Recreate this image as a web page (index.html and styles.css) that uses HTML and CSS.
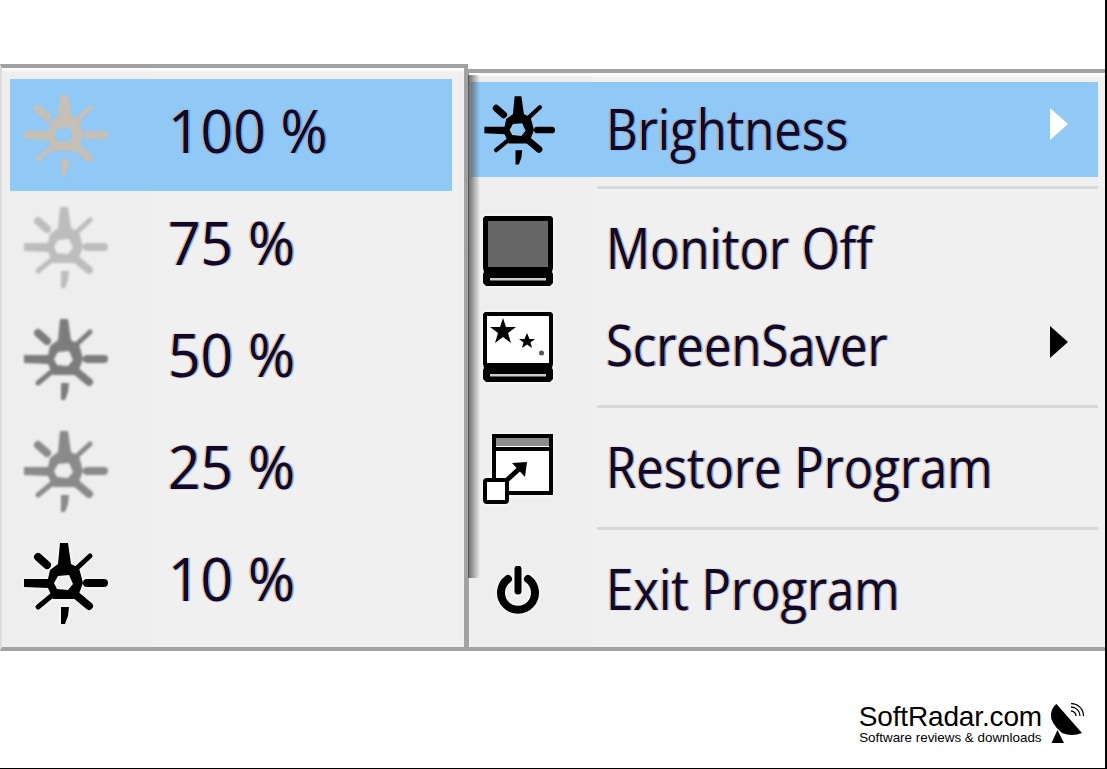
FILE: index.html
```html
<!DOCTYPE html>
<html lang="en">
<head>
<meta charset="utf-8">
<title>Brightness menu</title>
<link rel="stylesheet" href="styles.css">
</head>
<body>
<svg class="defs" width="0" height="0" aria-hidden="true">
  <symbol id="sun" viewBox="-44 -44 88 88">
    <path fill="currentColor" fill-rule="evenodd" d="M-4 -40H4L7 -19L15 -15L19 0L13 16L-11 16L-16 5L-40 4V-4L-16 -4L-14 -13L-6 -19ZM-6 -7L5 -8L9 1L4 7L-7 6L-10 0Z"/>
    <path fill="currentColor" d="M-3 24H5L4 33L1 41H-3Z"/>
    <g fill="none" stroke="currentColor" stroke-linecap="round">
      <path d="M23 0H40" stroke-width="8"/>
      <path d="M-26 -26L-17 -18M13 13L25 23" stroke-width="8"/>
      <path d="M26 -27L13 -15M-26 24L-9 10" stroke-width="5"/>
    </g>
  </symbol>
</svg>
<main class="page">
  <div class="menus">
    <section class="menu menu-left">
      <div class="level level-active">
        <svg class="sun sun-100"><use href="#sun"/></svg><span class="label">100 %</span>
      </div>
      <div class="level">
        <svg class="sun sun-75"><use href="#sun"/></svg><span class="label">75 %</span>
      </div>
      <div class="level">
        <svg class="sun sun-50"><use href="#sun"/></svg><span class="label">50 %</span>
      </div>
      <div class="level">
        <svg class="sun sun-25"><use href="#sun"/></svg><span class="label">25 %</span>
      </div>
      <div class="level">
        <svg class="sun sun-10"><use href="#sun"/></svg><span class="label">10 %</span>
      </div>
    </section>
    <section class="menu menu-right">
      <div class="row row-active">
        <span class="icon-cell"><svg class="sun-small"><use href="#sun"/></svg></span>
        <span class="label">Brightness</span>
        <svg class="arrow arrow-white" viewBox="0 0 18 32"><path d="M0 0L18 16L0 32Z"/></svg>
      </div>
      <div class="sep sep-first"></div>
      <div class="row">
        <span class="icon-cell">
          <svg class="glyph glyph-low" viewBox="0 0 70 70">
            <path d="M2 0H68L70 2V52L69 56L70 58V67L67 70H3L0 67V58L1 56L0 52V2Z"/>
            <rect x="5" y="5" width="60" height="46" fill="#666"/>
            <rect x="7" y="62" width="56" height="2.500" fill="#ccc"/>
          </svg>
        </span>
        <span class="label">Monitor Off</span>
      </div>
      <div class="row">
        <span class="icon-cell">
          <svg class="glyph" viewBox="0 0 70 70">
            <path d="M2 0H68L70 2V52L69 56L70 58V67L67 70H3L0 67V58L1 56L0 52V2Z"/>
            <rect x="4" y="4" width="62" height="47" fill="#fff"/>
            <rect x="7" y="62" width="56" height="2.500" fill="#ccc"/>
            <path d="M20 6L23 15H33L25 21L28 31L20 25L12 31L15 21L7 15H17Z"/>
            <path d="M44 21L46.500 27H52L47.500 30.500L49 36L44 32.500L39 36L40.500 30.500L36 27H41.500Z"/>
            <circle cx="58.500" cy="41" r="2.500" fill="#555"/>
          </svg>
        </span>
        <span class="label">ScreenSaver</span>
        <svg class="arrow" viewBox="0 0 18 32"><path d="M0 0L18 16L0 32Z"/></svg>
      </div>
      <div class="sep"></div>
      <div class="row">
        <span class="icon-cell">
          <svg class="glyph" viewBox="0 0 70 70">
            <rect x="11" y="2" width="57" height="57" fill="#fff" stroke="#000" stroke-width="4"/>
            <rect x="13" y="4" width="53" height="8" fill="#8c8c8c"/>
            <path d="M11 15H68" stroke="#000" stroke-width="4"/>
            <rect x="2" y="46" width="22" height="22" rx="2" fill="#fff" stroke="#000" stroke-width="4"/>
            <path d="M24 46L36 35" stroke="#000" stroke-width="5"/>
            <path d="M29 29L44 28L42 43Z"/>
          </svg>
        </span>
        <span class="label">Restore Program</span>
      </div>
      <div class="sep"></div>
      <div class="row">
        <span class="icon-cell">
          <svg class="power" viewBox="0 0 46 48">
            <path d="M13 13A17 17 0 1 0 33 13" fill="none" stroke="#000" stroke-width="8" stroke-linecap="round"/>
            <path d="M23 3V25" fill="none" stroke="#000" stroke-width="7" stroke-linecap="round"/>
          </svg>
        </span>
        <span class="label">Exit Program</span>
      </div>
    </section>
  </div>
  <footer class="brand">
    <div class="brand-text">
      <div class="brand-name">SoftRadar.com</div>
      <div class="brand-tag">Software reviews &amp; downloads</div>
    </div>
    <svg class="dish" viewBox="0 0 36 41">
      <path d="M6.500 1L32 30Q22 34 12 30Q0 20 1 11Q2 4 6.500 1Z"/>
      <path d="M7.500 27L14 40H1.500Z"/>
      <path d="M21 8A5 5 0 0 1 26 13M21 4A9 9 0 0 1 30 13M21 0.500A12.500 12.500 0 0 1 33.500 13" fill="none" stroke="#000" stroke-width="1.300"/>
    </svg>
  </footer>
</main>
</body>
</html>
```
FILE: styles.css
```css
* {
  box-sizing: border-box;
}

html,
body {
  margin: 0;
  padding: 0;
  background: #fff;
}

.defs {
  display: block;
  width: 0;
  height: 0;
}

.page {
  width: 1107px;
  height: 769px;
  overflow: hidden;
  padding-top: 64px;
  border-right: 2px solid #000;
  border-bottom: 1px solid #000;
}

.menus {
  display: flex;
  align-items: flex-start;
}

.menu {
  background: #f0f0f0;
  border-style: solid;
  border-color: #a2a2a2;
  font-family: "Open Sans", "Noto Sans", sans-serif;
}

.label {
  display: inline-block;
  padding-bottom: 4px;
  font-size: 56px;
  line-height: 1;
  white-space: nowrap;
  color: #12082c;
  text-shadow: -1.5px 0 1px rgba(255, 130, 0, 0.65), 1.5px 0 1px rgba(0, 120, 255, 0.65);
  transform: scaleX(0.875);
  transform-origin: left center;
  filter: blur(0.7px);
}

.menu-left {
  position: relative;
  z-index: 2;
  flex: none;
  width: 468px;
  height: 587px;
  border-width: 4px 4px 4px 2px;
  border-left-color: #dcdcdc;
  padding: 11px 12px 0 8px;
  background: linear-gradient(90deg, #eeeeee 150px, #f0f0f0 150px);
  box-shadow: inset 0 3px 2px #fbfbfb;
}

.menu-left .label {
  padding-bottom: 10px;
  font-size: 60px;
  transform: scaleX(0.95);
}

.menu-left::after {
  content: "";
  position: absolute;
  top: 7px;
  left: 100%;
  margin-left: 4px;
  width: 12px;
  height: 503px;
  background: linear-gradient(90deg, rgba(60, 60, 60, 0.75), rgba(60, 60, 60, 0));
}

.level {
  display: flex;
  align-items: center;
  height: 112px;
}

.level-active {
  background: #90c8f6;
}

.sun {
  flex: none;
  width: 88px;
  height: 88px;
  margin: 0 60px 0 10px;
  filter: blur(0.8px);
}

.sun-100 { color: #c8bfb5; }
.sun-75 { color: #bdbdbd; }
.sun-50 { color: #7c7c7c; }
.sun-25 { color: #8a8a8a; }
.sun-10 { color: #000; filter: blur(0.6px) drop-shadow(0 0 2px #fff); }

.menu-right {
  flex: none;
  width: 640px;
  height: 582px;
  margin-top: 5px;
  margin-left: -3px;
  border-width: 4px 0 4px 4px;
  padding: 9px 7px 0 2px;
  background: linear-gradient(90deg, #eeeeee 123px, #f0f0f0 123px);
  box-shadow: inset 0 3px 2px #fbfbfb;
}

.row {
  display: flex;
  align-items: center;
  height: 96px;
}

.row + .row {
  margin-top: 1px;
}

.row-active {
  height: 95px;
  background: #90c8f6;
}

.icon-cell {
  flex: none;
  display: flex;
  align-items: center;
  justify-content: center;
  width: 94px;
  margin-right: 41px;
}

.sun-small {
  width: 74px;
  height: 74px;
  color: #000;
  filter: blur(0.6px);
}

.glyph {
  width: 70px;
  height: 70px;
  margin-top: 2px;
  overflow: visible;
  filter: blur(0.7px) drop-shadow(0 0 2px #fff);
}

.glyph-low {
  margin-top: 4px;
}

.power {
  width: 46px;
  height: 48px;
  filter: blur(0.7px) drop-shadow(0 0 2px #fff);
}

.arrow {
  flex: none;
  width: 18px;
  height: 32px;
  margin-left: auto;
  margin-right: 30px;
  transform: translateY(-4px);
  filter: blur(0.7px);
}

.arrow-white {
  fill: #fff;
  transform: translateY(-6px);
}

.sep {
  height: 3px;
  margin: 11px 0 12px 126px;
  background: #d8d8d8;
}

.sep-first {
  margin-top: 9px;
  margin-bottom: 12px;
}

.brand {
  display: flex;
  justify-content: flex-end;
  align-items: flex-start;
  padding: 53px 19px 0 0;
  color: #000;
  font-family: "Liberation Sans", Arial, sans-serif;
}

.brand-text {
  margin-right: 8px;
}

.brand-name {
  font-size: 28px;
  line-height: 26px;
  letter-spacing: -0.15px;
}

.brand-tag {
  font-size: 13.4px;
  line-height: 15px;
  text-align: center;
}

.dish {
  width: 36px;
  height: 41px;
  margin-top: -1px;
}
```
